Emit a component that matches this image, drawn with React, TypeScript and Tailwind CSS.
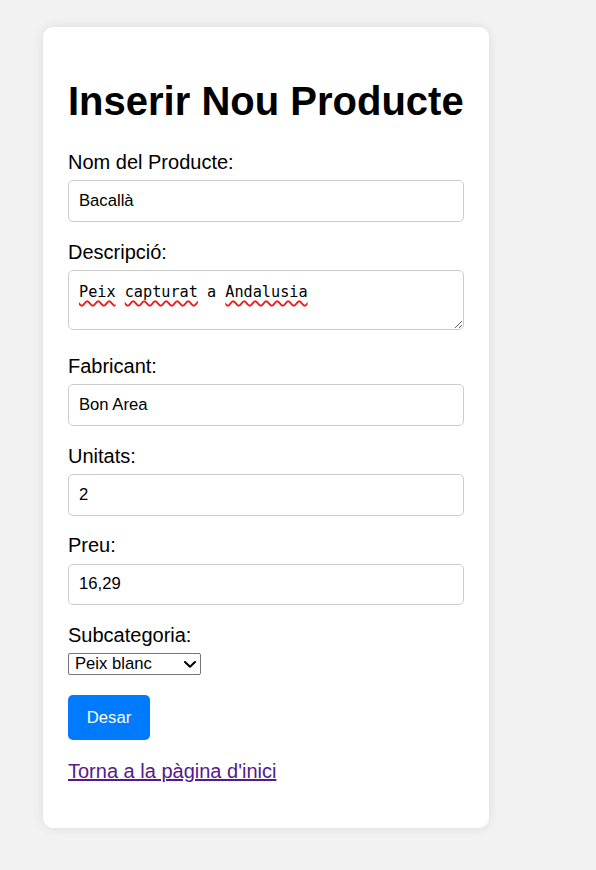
import React from "react";

function TextField({ label, value }: { label: string; value: string }) {
  return (
    <div>
      <label className="block text-[20px] leading-[23px] text-black mb-[6.25px]">{label}</label>
      <input
        type="text"
        defaultValue={value}
        className="block w-full h-[41.7px] border border-[#cccccc] rounded-[5px] bg-white px-[10px] text-[16.67px] text-black mb-[18.75px] outline-none"
      />
    </div>
  );
}

export default function App() {
  const wave =
    "underline decoration-wavy decoration-[#e52020] decoration-[1.5px] underline-offset-[3px]";
  return (
    <div className="min-h-[870px] bg-[#f2f2f2] pt-[27px] pl-[43px] font-['Liberation_Sans',Arial,sans-serif]">
      <div className="w-[446px] bg-white rounded-[10px] shadow-[0_0_12px_rgba(0,0,0,0.09)] pt-[51px] px-[25px] pb-[45px]">
        <h1 className="text-[40px] leading-[46px] font-bold text-black mb-[27px]">
          Inserir Nou Producte
        </h1>
        <form onSubmit={(e) => e.preventDefault()}>
          <TextField label="Nom del Producte:" value="Bacallà" />

          <label className="block text-[20px] leading-[23px] text-black mb-[6.25px]">Descripció:</label>
          <div className="relative mb-[25px]">
            <textarea
              spellCheck={false}
              defaultValue="Peix capturat a Andalusia"
              className="block w-full h-[60px] border border-[#cccccc] rounded-[5px] bg-white px-[10px] pt-[12px] pb-[8px] text-[15.2px] leading-[19px] text-black resize outline-none font-['DejaVu_Sans_Mono','Liberation_Mono',monospace]"
            />
            <div className="absolute inset-0 pointer-events-none border border-transparent px-[10px] pt-[12px] pb-[8px] text-[15.2px] leading-[19px] text-transparent whitespace-pre font-['DejaVu_Sans_Mono','Liberation_Mono',monospace]">
              <span className={wave}>Peix</span> <span className={wave}>capturat</span> a{" "}
              <span className={wave}>Andalusia</span>
            </div>
          </div>

          <TextField label="Fabricant:" value="Bon Area" />
          <TextField label="Unitats:" value="2" />
          <TextField label="Preu:" value="16,29" />

          <label className="block text-[20px] leading-[23px] text-black mb-[6.25px]">Subcategoria:</label>
          <div className="relative w-[133px] h-[22px] mt-[3px] mb-[19.7px]">
            <select
              defaultValue="Peix blanc"
              className="appearance-none block w-full h-full border border-[#767676] rounded-[2px] bg-white pl-[6px] text-[16.67px] leading-[20px] text-black outline-none"
            >
              <option>Peix blanc</option>
              <option>Peix blau</option>
              <option>Marisc</option>
            </select>
            <svg
              className="absolute right-[5px] top-[7.5px] w-[12px] h-[7px] pointer-events-none"
              viewBox="0 0 12 7"
              fill="none"
            >
              <path d="M1 1 L6 5.8 L11 1" stroke="#000" strokeWidth="2" strokeLinecap="round" strokeLinejoin="round" />
            </svg>
          </div>

          <button
            type="submit"
            className="block w-[82px] h-[44.7px] bg-[#007bff] text-white text-[16.67px] rounded-[5px] mb-[20px]"
          >
            Desar
          </button>
        </form>
        <p className="text-[20px] leading-[23px]">
          <a href="#" className="text-[#551a8b] underline">
            Torna a la pàgina d'inici
          </a>
        </p>
      </div>
    </div>
  );
}
